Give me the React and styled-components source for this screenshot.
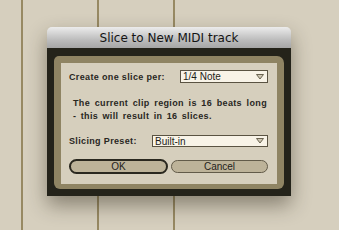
import React from "react"
import styled, { createGlobalStyle } from "styled-components"

const Global = createGlobalStyle`
  html, body {
    margin: 0;
    padding: 0;
    background: #d6cfbe;
    overflow: hidden;
  }
`

const Desk = styled.div`
  width: 339px;
  height: 230px;
  box-sizing: border-box;
  padding: 27px 0 0 47px;
  background-color: #d6cfbe;
  background-image: linear-gradient(#978963, #978963),
    linear-gradient(#978963, #978963), linear-gradient(#978963, #978963);
  background-size: 2px 100%;
  background-repeat: no-repeat;
  background-position: 21px 0, 97px 0, 173px 0;
`

const Dialog = styled.div`
  width: 244px;
  border-radius: 5px 5px 0 0;
  box-shadow: 0 9px 20px rgba(40, 34, 20, 0.45);
`

const TitleBar = styled.div`
  height: 21px;
  display: flex;
  align-items: center;
  justify-content: center;
  border-radius: 5px 5px 0 0;
  background: linear-gradient(#ececec, #bdbdbd 60%, #a6a6a6);
  font-family: "DejaVu Sans", sans-serif;
  font-size: 12px;
  color: #141414;
`

const Frame = styled.div`
  background: #24231a;
  padding: 8px 7px 7px 7px;
`

const Bezel = styled.div`
  background: #8f8463;
  border-radius: 5px 7px 6px 6px;
  padding: 7px 7px 5px 7px;
`

const Panel = styled.div`
  background: #d6cfbd;
  height: 121px;
  box-sizing: border-box;
  padding: 7px 9px 0 8px;
  display: flex;
  flex-direction: column;
  font-family: "Liberation Sans", Arial, sans-serif;
  color: #29271f;
`

const Row = styled.div`
  display: flex;
  align-items: center;
  justify-content: space-between;
  margin-top: ${(p) => p.$top || 0}px;
`

const Label = styled.span`
  font-size: 9px;
  font-weight: bold;
  letter-spacing: 0.35px;
`

const Select = styled.div`
  width: ${(p) => p.$width}px;
  height: ${(p) => p.$height}px;
  box-sizing: border-box;
  border: 1px solid #5a5342;
  background: #f8f3e7;
  display: flex;
  align-items: center;
  justify-content: space-between;
  padding: 0 3px 0 2px;
  font-size: 10px;
  color: #1e1d18;
`

const Message = styled.div`
  margin: 14px 1px 0 4px;
  font-size: 9px;
  font-weight: bold;
  letter-spacing: 0.35px;
  line-height: 13px;
`

const JustLine = styled.div`
  text-align: justify;
  text-align-last: justify;
`

const TailLine = styled.div`
  word-spacing: 1.5px;
`

const Buttons = styled.div`
  display: flex;
  gap: 3px;
  margin-top: 12px;
  align-items: center;
`

const Button = styled.div`
  box-sizing: border-box;
  width: ${(p) => p.$width}px;
  height: ${(p) => (p.$default ? 15 : 13)}px;
  border-radius: 8px;
  border: ${(p) => (p.$default ? "2px solid #2a281f" : "1px solid #625b49")};
  background: #bdb399;
  display: flex;
  align-items: center;
  justify-content: center;
  font-size: 10px;
  color: #24221b;
`

const Arrow = () => (
  <svg width="8" height="6" viewBox="0 0 8 6">
    <path d="M0.5 0.5 H7.5 L4 5 Z" fill="#cfc7b4" stroke="#6a6350" strokeWidth="1" />
  </svg>
)

export default function App() {
  return (
    <Desk>
      <Global />
      <Dialog>
        <TitleBar>Slice to New MIDI track</TitleBar>
        <Frame>
          <Bezel>
            <Panel>
              <Row>
                <Label>Create one slice per:</Label>
                <Select $width={88} $height={13}>
                  <span>1/4 Note</span>
                  <Arrow />
                </Select>
              </Row>
              <Message>
                <JustLine>The current clip region is 16 beats long</JustLine>
                <TailLine>- this will result in 16 slices.</TailLine>
              </Message>
              <Row $top={12}>
                <Label>Slicing Preset:</Label>
                <Select $width={116} $height={12}>
                  <span>Built-in</span>
                  <Arrow />
                </Select>
              </Row>
              <Buttons>
                <Button $default $width={100}>OK</Button>
                <Button $width={98}>Cancel</Button>
              </Buttons>
            </Panel>
          </Bezel>
        </Frame>
      </Dialog>
    </Desk>
  )
}
